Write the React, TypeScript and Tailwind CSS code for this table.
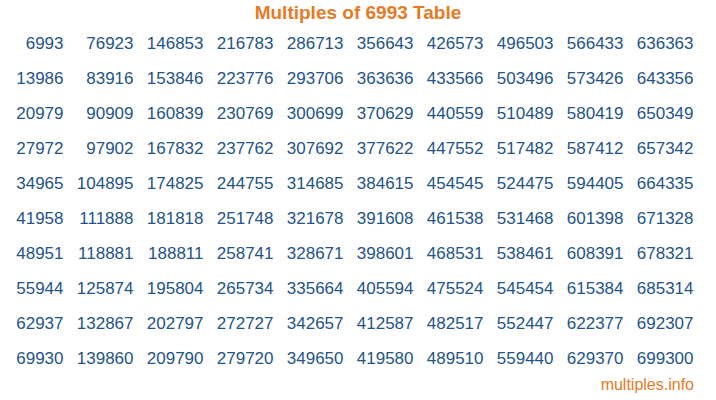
const BASE = 6993;
const rows = Array.from({ length: 10 }, (_, r) =>
  Array.from({ length: 10 }, (_, c) => BASE * (c * 10 + r + 1)),
);

export default function App() {
  return (
    <main className="h-[400px] w-[716px] bg-white font-['Liberation_Sans',Arial,sans-serif]">
      <h1 className="h-[26px] text-center text-[19px] font-bold leading-[25px] text-[#e67a25]">
        Multiples of {BASE} Table
      </h1>
      <div className="grid grid-cols-[repeat(10,70px)]">
        {rows.flat().map((n, i) => (
          <div key={i} className="h-[35px] pr-[6.5px] text-right text-[17px] leading-[35px] text-[#245487]">
            {n}
          </div>
        ))}
      </div>
      <p className="pr-[22px] text-right text-[16px] leading-[17px] text-[#e67a25]">multiples.info</p>
    </main>
  );
}
